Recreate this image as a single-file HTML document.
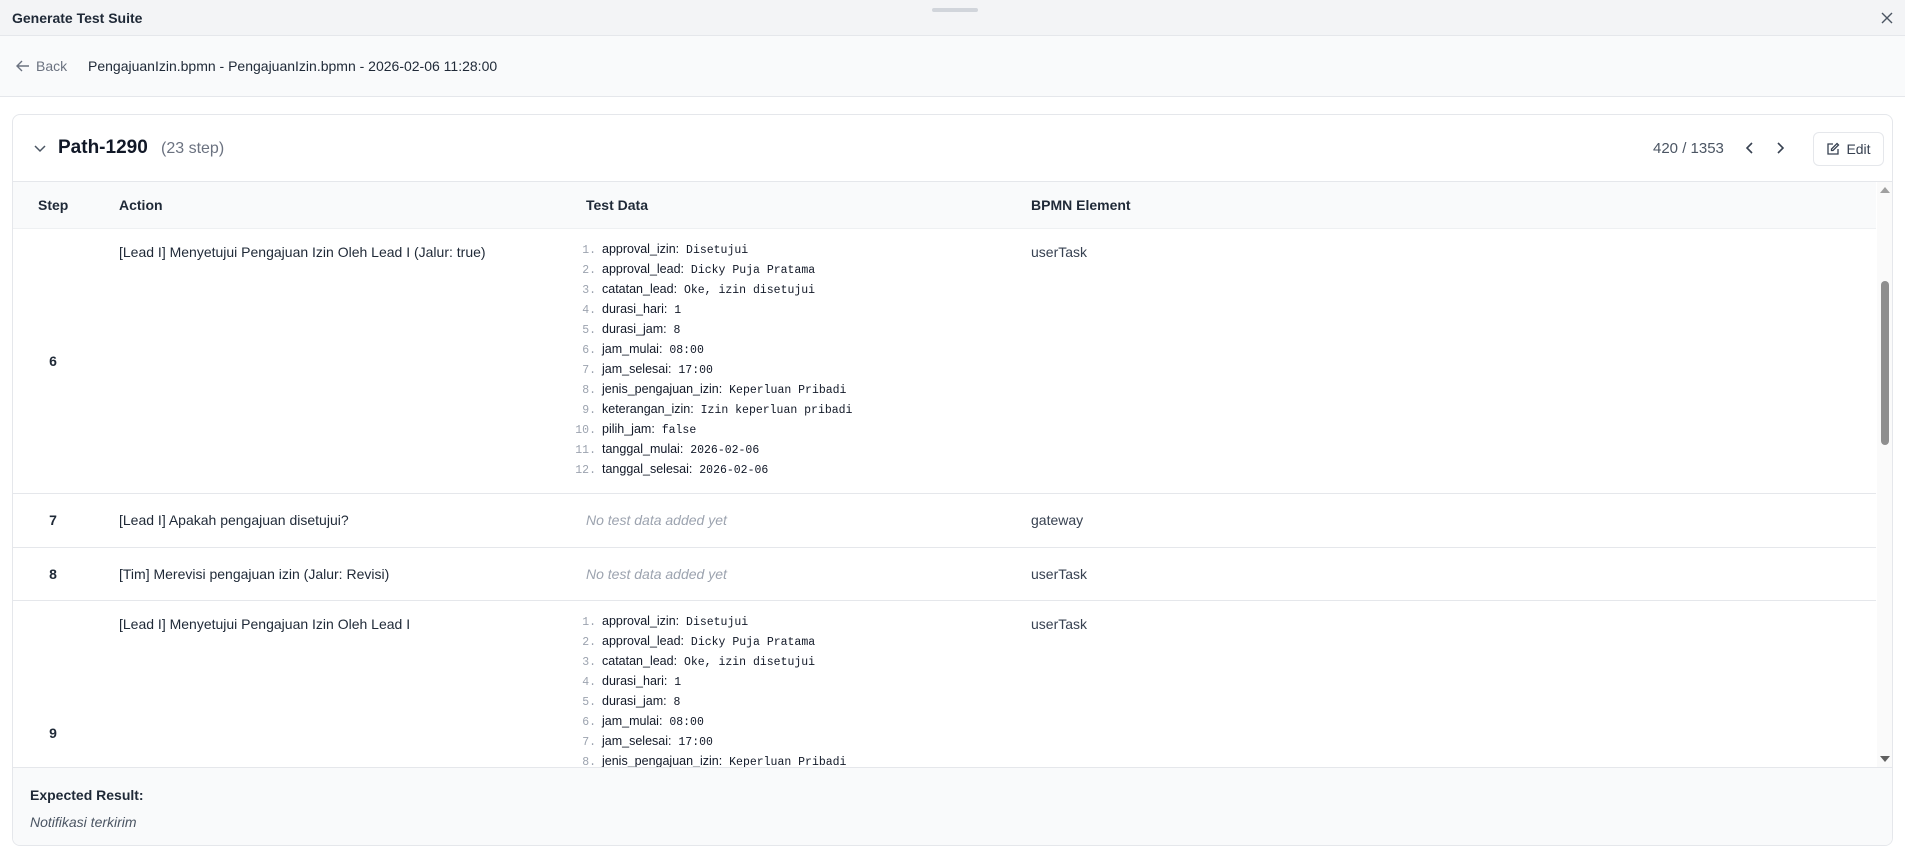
<!DOCTYPE html>
<html><head><meta charset="utf-8"><style>
*{box-sizing:border-box;margin:0;padding:0}
body{width:1905px;height:853px;overflow:hidden;background:#fff;font-family:"Liberation Sans",sans-serif;color:#111827;position:relative}
.title{position:absolute;left:0;top:0;width:1905px;height:36px;background:#f3f4f6;border-bottom:1px solid #e5e7eb}
.title .t{position:absolute;left:12px;top:10px;font-size:14px;font-weight:bold;color:#1f2937}
.handle{position:absolute;left:932px;top:8px;width:46px;height:4px;border-radius:2px;background:#d1d5db}
.hdr{position:absolute;left:0;top:36px;width:1905px;height:61px;background:#f9fafb;border-bottom:1px solid #e5e7eb}
.back{position:absolute;left:16px;top:22px;font-size:14px;color:#6b7280;display:flex;align-items:center;gap:6px}
.crumb{position:absolute;left:88px;top:22px;font-size:14px;color:#1f2937}
.card{position:absolute;left:12px;top:114px;width:1881px;height:732px;border:1px solid #e5e7eb;border-radius:8px;overflow:hidden;background:#fff}
.ch{position:absolute;left:0;top:0;width:100%;height:67px;border-bottom:1px solid #e5e7eb}
.pt{position:absolute;left:45px;top:22px;font-size:19px;font-weight:bold}
.ps{position:absolute;left:148px;top:25px;font-size:16px;color:#6b7280}
.cnt{position:absolute;left:1640px;top:25px;font-size:15px;color:#4b5563}
.edit{position:absolute;left:1800px;top:17px;width:71px;height:34px;border:1px solid #e5e7eb;border-radius:6px;font-size:14px;color:#374151;display:flex;align-items:center;justify-content:center;gap:6px}
.tbl{position:absolute;left:0;top:67px;width:100%;height:585px;overflow:hidden}
.th{position:absolute;left:0;top:0;width:1863px;height:47px;background:#f9fafb;border-bottom:1px solid #eef0f2;font-size:14px;font-weight:bold;color:#1f2937}
.th span,.row span{position:absolute}
.row{position:absolute;left:0;width:1863px;border-bottom:1px solid #e5e7eb;font-size:14px;color:#1f2937}
.row .s{left:0;width:80px;text-align:center;font-weight:bold}
.row .a{left:106px}
.row .b{left:1018px;color:#374151}
.row .nd{left:573px;color:#9ca3af;font-style:italic}
ol{position:absolute;left:573px;list-style:none;font-family:"Liberation Mono",monospace;font-size:11.5px;color:#111827}
ol li{height:20px;line-height:20px;white-space:nowrap}
ol li i{font-style:normal;color:#9ca3af;display:inline-block;width:22px;text-align:right;margin-right:6px;margin-left:-12px}
ol li b{font-family:"Liberation Sans",sans-serif;font-weight:normal;font-size:12.5px}
.sb{position:absolute;left:1864px;top:0;width:16px;height:585px;background:#fafafa}
.thumb{position:absolute;left:4px;top:99px;width:8px;height:164px;border-radius:4px;background:#8f8f8f}
.exp{position:absolute;left:0;top:652px;width:100%;height:80px;background:#f9fafb;border-top:1px solid #e5e7eb}
</style></head><body>
<div class="title"><div class="t">Generate Test Suite</div><div class="handle"></div>
<svg style="position:absolute;left:1881px;top:12px" width="12" height="12" viewBox="0 0 12 12"><path d="M1 1L11 11M11 1L1 11" stroke="#4b5563" stroke-width="1.4"/></svg></div>
<div class="hdr"><div class="back"><svg width="14" height="14" viewBox="0 0 14 14"><path d="M13 7H1M6 2L1 7L6 12" stroke="#6b7280" stroke-width="1.4" fill="none"/></svg>Back</div>
<div class="crumb">PengajuanIzin.bpmn - PengajuanIzin.bpmn - 2026-02-06 11:28:00</div></div>
<div class="card">
<div class="ch"><svg style="position:absolute;left:21px;top:30px" width="12" height="8" viewBox="0 0 12 8"><path d="M1 1L6 6L11 1" stroke="#4b5563" stroke-width="1.5" fill="none"/></svg>
<div class="pt">Path-1290</div><div class="ps">(23 step)</div>
<div class="cnt">420 / 1353</div>
<svg style="position:absolute;left:1733px;top:27px" width="8" height="12" viewBox="0 0 8 12"><path d="M6 1L1 6L6 11" stroke="#374151" stroke-width="1.6" fill="none"/></svg>
<svg style="position:absolute;left:1763px;top:27px" width="8" height="12" viewBox="0 0 8 12"><path d="M2 1L7 6L2 11" stroke="#374151" stroke-width="1.6" fill="none"/></svg>
<div class="edit"><svg width="14" height="14" viewBox="0 0 14 14"><path d="M7 2H2V12H12V7" stroke="#374151" stroke-width="1.3" fill="none"/><path d="M11 1.5L12.5 3L7 8.5H5.5V7Z" stroke="#374151" stroke-width="1.3" fill="none"/></svg>Edit</div></div>
<div class="tbl">
<div class="row" style="top:47px;height:265px"><span class="s" style="top:124px">6</span><span class="a" style="top:15px">[Lead I] Menyetujui Pengajuan Izin Oleh Lead I (Jalur: true)</span><span class="b" style="top:15px">userTask</span>
<ol style="top:10px"><li><i>1.</i><b>approval_izin:</b> Disetujui</li><li><i>2.</i><b>approval_lead:</b> Dicky Puja Pratama</li><li><i>3.</i><b>catatan_lead:</b> Oke, izin disetujui</li><li><i>4.</i><b>durasi_hari:</b> 1</li><li><i>5.</i><b>durasi_jam:</b> 8</li><li><i>6.</i><b>jam_mulai:</b> 08:00</li><li><i>7.</i><b>jam_selesai:</b> 17:00</li><li><i>8.</i><b>jenis_pengajuan_izin:</b> Keperluan Pribadi</li><li><i>9.</i><b>keterangan_izin:</b> Izin keperluan pribadi</li><li><i>10.</i><b>pilih_jam:</b> false</li><li><i>11.</i><b>tanggal_mulai:</b> 2026-02-06</li><li><i>12.</i><b>tanggal_selesai:</b> 2026-02-06</li></ol></div>
<div class="row" style="top:312px;height:54px"><span class="s" style="top:18px">7</span><span class="a" style="top:18px">[Lead I] Apakah pengajuan disetujui?</span><span class="nd" style="top:18px">No test data added yet</span><span class="b" style="top:18px">gateway</span></div>
<div class="row" style="top:366px;height:53px"><span class="s" style="top:18px">8</span><span class="a" style="top:18px">[Tim] Merevisi pengajuan izin (Jalur: Revisi)</span><span class="nd" style="top:18px">No test data added yet</span><span class="b" style="top:18px">userTask</span></div>
<div class="row" style="top:419px;height:265px;border:none"><span class="s" style="top:124px">9</span><span class="a" style="top:15px">[Lead I] Menyetujui Pengajuan Izin Oleh Lead I</span><span class="b" style="top:15px">userTask</span>
<ol style="top:10px"><li><i>1.</i><b>approval_izin:</b> Disetujui</li><li><i>2.</i><b>approval_lead:</b> Dicky Puja Pratama</li><li><i>3.</i><b>catatan_lead:</b> Oke, izin disetujui</li><li><i>4.</i><b>durasi_hari:</b> 1</li><li><i>5.</i><b>durasi_jam:</b> 8</li><li><i>6.</i><b>jam_mulai:</b> 08:00</li><li><i>7.</i><b>jam_selesai:</b> 17:00</li><li><i>8.</i><b>jenis_pengajuan_izin:</b> Keperluan Pribadi</li><li><i>9.</i><b>keterangan_izin:</b> Izin keperluan pribadi</li></ol></div>
<div class="th"><span style="left:25px;top:15px">Step</span><span style="left:106px;top:15px">Action</span><span style="left:573px;top:15px">Test Data</span><span style="left:1018px;top:15px">BPMN Element</span></div>
<div class="sb"><svg style="position:absolute;left:3px;top:4px" width="10" height="7"><path d="M0 7L5 1L10 7Z" fill="#a0a0a0"/></svg><div class="thumb"></div><svg style="position:absolute;left:3px;top:574px" width="10" height="7"><path d="M0 0L5 6L10 0Z" fill="#606060"/></svg></div>
</div>
<div class="exp"><div style="position:absolute;left:17px;top:19px;font-size:14px;font-weight:bold;color:#1f2937">Expected Result:</div><div style="position:absolute;left:17px;top:46px;font-size:14px;font-style:italic;color:#4b5563">Notifikasi terkirim</div></div>
</div>
</body></html>
